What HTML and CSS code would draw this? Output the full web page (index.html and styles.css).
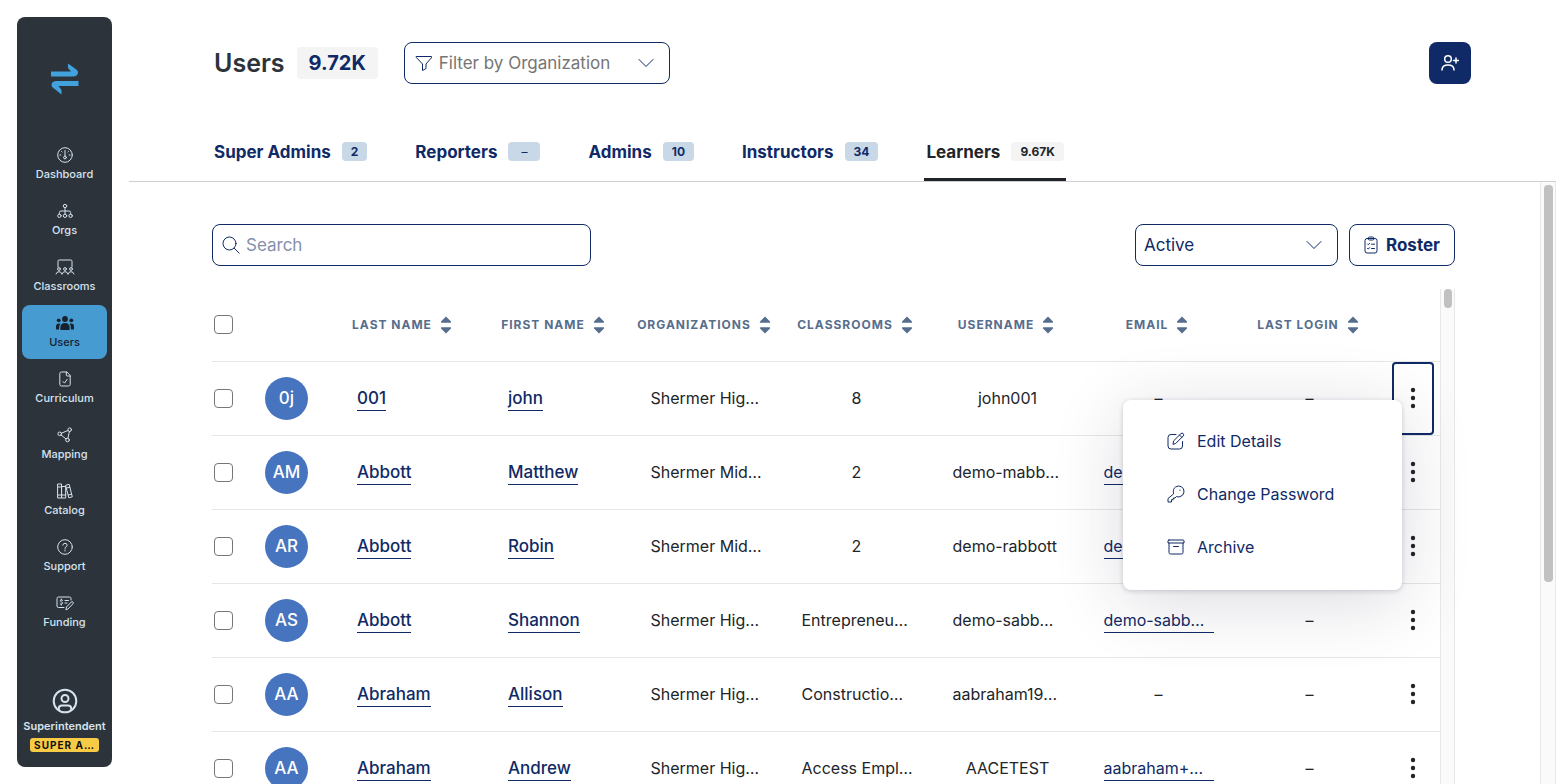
FILE: index.html
```html
<!DOCTYPE html>
<html lang="en">

<head>
  <meta charset="UTF-8" />
  <meta name="viewport" content="width=device-width, initial-scale=1.0" />
  <title>Users</title>
  <link rel="stylesheet" href="styles.css">
</head>

<body>
  <!-- shared icons -->
  <svg class="sprite" aria-hidden="true">
    <symbol id="i-chevron" viewBox="0 0 16 10">
      <path d="M1 1.5l7 7 7-7" />
    </symbol>
    <symbol id="i-sort" viewBox="0 0 12 18">
      <path d="M6 0.5L11 5.5q.6 1.3-.8 1.3H1.8Q.4 6.8 1 5.5zM6 17.5L11 12.5q.6-1.3-.8-1.3H1.8Q.4 11.2 1 12.5z" />
    </symbol>
    <symbol id="i-dots" viewBox="0 0 6 22">
      <circle cx="3" cy="3" r="2.2" />
      <circle cx="3" cy="11" r="2.2" />
      <circle cx="3" cy="19" r="2.2" />
    </symbol>
  </svg>

  <aside class="sidebar">
    <a class="logo" href="#" aria-label="Home">
      <svg width="28" height="32" viewBox="0 0 28 32">
        <path d="M0 8.5H20L17 5V0.5L25 6.2Q27.5 8 27 10Q26 13.5 22 13.5H0z" />
        <path d="M27.500 18H6Q0.500 18 0.500 22Q0.500 24 3 25.5L10.500 31.500V27L7.500 23H27.500z" />
      </svg>
    </a>

    <nav class="nav">
      <a href="#">
        <svg width="16" height="16" viewBox="0 0 16 16">
          <circle cx="8" cy="8" r="7.3" />
          <circle cx="8" cy="10.5" r="1.4" />
          <path d="M8 9V3.5M3 8h.8M12.2 8h.8M4.5 4.5l.5.5M11.5 4.5l-.5.5" />
        </svg>
        Dashboard
      </a>
      <a href="#">
        <svg width="16" height="16" viewBox="0 0 16 16">
          <circle cx="8" cy="3" r="1.7" />
          <circle cx="2.4" cy="12.8" r="1.7" />
          <circle cx="8" cy="12.8" r="1.7" />
          <circle cx="13.6" cy="12.8" r="1.7" />
          <path d="M8 4.7v6.4M2.4 11V9.5Q2.4 8 4 8h8q1.6 0 1.6 1.5V11" />
        </svg>
        Orgs
      </a>
      <a href="#">
        <svg width="20" height="16" viewBox="0 0 20 16">
          <path d="M3 8V2.2Q3 1 4.2 1h11.6Q17 1 17 2.2V8" />
          <circle cx="4" cy="10" r="1.4" />
          <circle cx="10" cy="10" r="1.4" />
          <circle cx="16" cy="10" r="1.4" />
          <path d="M1 15q.6-2.3 3-2.3T7 15M7 15q.6-2.3 3-2.3T13 15M13 15q.6-2.3 3-2.3T19 15" />
        </svg>
        Classrooms
      </a>
      <a href="#" class="active">
        <svg width="20" height="16" viewBox="0 0 20 16">
          <circle cx="10" cy="4" r="2.9" />
          <circle cx="3.7" cy="5.3" r="1.9" />
          <circle cx="16.3" cy="5.3" r="1.9" />
          <path d="M5.4 15v-2.5Q5.4 8 10 8t4.6 4.5V15zM1 14.5V11.8Q1 8.5 4 8.5q.8 0 1.3.3Q4 10.500 4 14.5zM19 14.5V11.8Q19 8.5 16 8.5q-.8 0-1.3.3Q16 10.5 16 14.5z" />
        </svg>
        Users
      </a>
      <a href="#">
        <svg width="16" height="16" viewBox="0 0 16 16">
          <path d="M9.5 1H4.5Q2.8 1 2.8 2.7v10.6Q2.8 15 4.5 15h7q1.7 0 1.7-1.7V4.8zM9.3 1v3q0 1 1 1h2.9M6 10.6l1.5 1.5 2.7-3.8" />
        </svg>
        Curriculum
      </a>
      <a href="#">
        <svg width="16" height="16" viewBox="0 0 16 16">
          <circle cx="2.7" cy="6.8" r="1.8" />
          <circle cx="12.7" cy="2.7" r="1.8" />
          <circle cx="10.5" cy="13" r="1.8" />
          <path d="M4.4 6.2l6.6-2.7M12.4 4.5l-1.5 6.7M4 8l5 3.9" />
        </svg>
        Mapping
      </a>
      <a href="#">
        <svg width="16" height="16" viewBox="0 0 16 16">
          <path d="M1 1h3.5v14H1zM5 3.5h3.7V15H5zM1 4h3.5M1 12h3.5M5 12h3.7M8.9 2.2l3.2-.9 3.2 12.5-3.1.9zM9.7 5l3.1-.8M11.4 12l3.2-.8" />
        </svg>
        Catalog
      </a>
      <a href="#">
        <svg width="16" height="16" viewBox="0 0 16 16">
          <circle cx="8" cy="8" r="7.3" />
          <path d="M5.8 6.2Q5.9 4.3 8 4.3t2.2 1.9Q10.2 7.2 9 7.8T8 9.5M8 11v1" />
        </svg>
        Support
      </a>
      <a href="#">
        <svg width="18" height="16" viewBox="0 0 18 16">
          <path d="M8 12.5H2.5Q1 12.5 1 11V3.5Q1 2 2.5 2h11Q15 2 15 3.5V5M6.6 5.3Q5.9 4.7 5 4.9q-1 .3-.6 1.3.3.5 1.2.8 1 .3 1 1.2-.2.900-1.2.9T4 8.600M5.3 4v.8M5.3 9.2v.9M9 5.500h3.500M9 8h2M10 14.500l.5-2.500 4.700-5q.9-.8 1.700 0 .8.8.1 1.700l-4.600 4.900z" />
        </svg>
        Funding
      </a>
    </nav>

    <div class="profile">
      <svg width="26" height="26" viewBox="0 0 26 26">
        <circle cx="13" cy="13" r="11.3" />
        <circle cx="13" cy="10.5" r="3.5" />
        <path d="M6.8 22V20.5Q6.8 17.5 10 17.5h6q3.2 0 3.2 3V22" />
      </svg>
      <span class="profile-name">Superintendent</span>
      <span class="role">SUPER A…</span>
    </div>
  </aside>

  <main class="main">
    <header class="header">
      <h1>Users</h1>
      <span class="total">9.72K</span>
      <div class="field filter">
        <svg width="18" height="18" viewBox="0 0 18 18">
          <path d="M1.5 2.5h15v1.2L11 10v4.5L7.5 16.5V10L1.5 3.7z" />
        </svg>
        <select aria-label="Filter by Organization">
          <option>Filter by Organization</option>
        </select>
        <svg class="chevron" width="16" height="10"><use href="#i-chevron" /></svg>
      </div>
      <button class="add" aria-label="Add user">
        <svg width="18" height="18" viewBox="0 0 18 18">
          <circle cx="7" cy="5" r="3.3" />
          <path d="M1 16q0-5 6-5t6 5M15 4v5M12.5 6.5h5" />
        </svg>
      </button>
    </header>

    <nav class="tabs">
      <a href="#">Super Admins <span class="count">2</span></a>
      <a href="#">Reporters <span class="count empty">–</span></a>
      <a href="#">Admins <span class="count">10</span></a>
      <a href="#">Instructors <span class="count">34</span></a>
      <a href="#" class="current">Learners <span class="count">9.67K</span></a>
    </nav>

    <div class="panel">
      <section class="content">
        <div class="toolbar">
          <div class="field search">
            <svg width="18" height="18" viewBox="0 0 18 18">
              <circle cx="7.5" cy="7.5" r="6.5" />
              <path d="M12.2 12.2l5 5" />
            </svg>
            <input type="search" placeholder="Search" aria-label="Search">
          </div>
          <div class="field status">
            <select aria-label="Status">
              <option>Active</option>
            </select>
            <svg class="chevron" width="16" height="10"><use href="#i-chevron" /></svg>
          </div>
          <button class="roster">
            <svg width="14" height="18" viewBox="0 0 14 18">
              <rect x="1" y="2.5" width="12" height="14.5" rx="2" />
              <path d="M4 2.5Q4 1 5.5 1h3Q10 1 10 2.5T8.5 4h-3Q4 4 4 2.5zM3.5 8l.8.8L5.6 7.3M7.5 8.2h3M3.5 12.3l.8.8 1.3-1.5M7.5 12.5h3" />
            </svg>
            Roster
          </button>
        </div>

        <div class="table-wrap">
          <table>
            <colgroup>
              <col class="col-check">
              <col class="col-avatar">
              <col span="7">
              <col class="col-actions">
            </colgroup>
            <thead>
              <tr>
                <th class="check"><input type="checkbox" aria-label="Select all"></th>
                <th></th>
                <th><button>Last Name <svg><use href="#i-sort" /></svg></button></th>
                <th><button>First Name <svg><use href="#i-sort" /></svg></button></th>
                <th><button>Organizations <svg><use href="#i-sort" /></svg></button></th>
                <th><button>Classrooms <svg><use href="#i-sort" /></svg></button></th>
                <th><button>Username <svg><use href="#i-sort" /></svg></button></th>
                <th><button>Email <svg><use href="#i-sort" /></svg></button></th>
                <th><button>Last Login <svg><use href="#i-sort" /></svg></button></th>
                <th></th>
              </tr>
            </thead>
            <tbody>
              <tr>
                <td class="check"><input type="checkbox" aria-label="Select john 001"></td>
                <td><span class="avatar">0j</span></td>
                <td class="name"><a href="#">001</a></td>
                <td class="name"><a href="#">john</a></td>
                <td><span class="clip">Shermer Hig…</span></td>
                <td>8</td>
                <td>john001</td>
                <td>–</td>
                <td>–</td>
                <td class="actions">
                  <button class="more open" aria-label="Actions"><svg><use href="#i-dots" /></svg></button>
                  <div class="menu">
                    <button>
                      <svg width="18" height="18" viewBox="0 0 18 18">
                        <path d="M9 2.5H4Q1 2.5 1 5.5V14q0 3 3 3h8.5q3 0 3-3V9.5M6 12l.7-3.2L14 1.5q1-.9 2.2.2 1 1.1.1 2.2L9 11.2zM12.5 3l2.3 2.3" />
                      </svg>
                      Edit Details
                    </button>
                    <button>
                      <svg width="18" height="18" viewBox="0 0 18 18">
                        <path d="M6.5 8.5Q5.5 4 8.5 2T14.5 1.8Q17.3 3.5 17 7T13 11.7Q11 12.3 9.5 11.5L8 13H6.3v1.7H4.5V17H1v-3z" />
                        <path d="M12.8 5.2h.4" />
                      </svg>
                      Change Password
                    </button>
                    <button>
                      <svg width="18" height="18" viewBox="0 0 18 18">
                        <path d="M2 2h14q1 0 1 1v2H1V3Q1 2 2 2zM2 5v9.5Q2 16 3.5 16h11q1.5 0 1.5-1.5V5M6.5 8.5h5" />
                      </svg>
                      Archive
                    </button>
                  </div>
                </td>
              </tr>
              <tr>
                <td class="check"><input type="checkbox" aria-label="Select Matthew Abbott"></td>
                <td><span class="avatar">AM</span></td>
                <td class="name"><a href="#">Abbott</a></td>
                <td class="name"><a href="#">Matthew</a></td>
                <td><span class="clip">Shermer Mid…</span></td>
                <td>2</td>
                <td><span class="clip">demo-mabb…</span></td>
                <td><a href="#" class="clip">demo-mab…</a></td>
                <td>–</td>
                <td class="actions"><button class="more" aria-label="Actions"><svg><use href="#i-dots" /></svg></button></td>
              </tr>
              <tr>
                <td class="check"><input type="checkbox" aria-label="Select Robin Abbott"></td>
                <td><span class="avatar">AR</span></td>
                <td class="name"><a href="#">Abbott</a></td>
                <td class="name"><a href="#">Robin</a></td>
                <td><span class="clip">Shermer Mid…</span></td>
                <td>2</td>
                <td><span class="clip">demo-rabbott</span></td>
                <td><a href="#" class="clip">demo-rabb…</a></td>
                <td>–</td>
                <td class="actions"><button class="more" aria-label="Actions"><svg><use href="#i-dots" /></svg></button></td>
              </tr>
              <tr>
                <td class="check"><input type="checkbox" aria-label="Select Shannon Abbott"></td>
                <td><span class="avatar">AS</span></td>
                <td class="name"><a href="#">Abbott</a></td>
                <td class="name"><a href="#">Shannon</a></td>
                <td><span class="clip">Shermer Hig…</span></td>
                <td><span class="clip">Entrepreneu…</span></td>
                <td><span class="clip">demo-sabb…</span></td>
                <td><a href="#" class="clip">demo-sabb…</a></td>
                <td>–</td>
                <td class="actions"><button class="more" aria-label="Actions"><svg><use href="#i-dots" /></svg></button></td>
              </tr>
              <tr>
                <td class="check"><input type="checkbox" aria-label="Select Allison Abraham"></td>
                <td><span class="avatar">AA</span></td>
                <td class="name"><a href="#">Abraham</a></td>
                <td class="name"><a href="#">Allison</a></td>
                <td><span class="clip">Shermer Hig…</span></td>
                <td><span class="clip">Constructio…</span></td>
                <td><span class="clip">aabraham19…</span></td>
                <td>–</td>
                <td>–</td>
                <td class="actions"><button class="more" aria-label="Actions"><svg><use href="#i-dots" /></svg></button></td>
              </tr>
              <tr>
                <td class="check"><input type="checkbox" aria-label="Select Andrew Abraham"></td>
                <td><span class="avatar">AA</span></td>
                <td class="name"><a href="#">Abraham</a></td>
                <td class="name"><a href="#">Andrew</a></td>
                <td><span class="clip">Shermer Hig…</span></td>
                <td><span class="clip">Access Empl…</span></td>
                <td>AACETEST</td>
                <td><a href="#" class="clip">aabraham+…</a></td>
                <td>–</td>
                <td class="actions"><button class="more" aria-label="Actions"><svg><use href="#i-dots" /></svg></button></td>
              </tr>
            </tbody>
          </table>
          <div class="scrollbar"><div class="thumb"></div></div>
        </div>
      </section>
      <div class="scrollbar page-scroll"><div class="thumb"></div></div>
    </div>
  </main>
</body>

</html>
```

FILE: styles.css
```css
* {
  box-sizing: border-box;
}

body {
  margin: 0;
  display: flex;
  height: 100vh;
  overflow: hidden;
  background: #fff;
  color: #212529;
  font-family: Inter, "Open Sans", sans-serif;
  font-size: 17px;
}

button,
input,
select {
  font: inherit;
  color: inherit;
}

button {
  padding: 0;
  border: 0;
  background: none;
  cursor: pointer;
}

a {
  color: #0f2a66;
}

svg {
  flex: none;
  fill: none;
  stroke: currentColor;
  stroke-linecap: round;
  stroke-linejoin: round;
}

.sprite {
  display: none;
}

/* sidebar */

.sidebar {
  flex: none;
  display: flex;
  flex-direction: column;
  width: 95px;
  margin: 17px;
  padding: 0 5px 15px;
  border-radius: 8px;
  background: #2d333b;
  color: #d5e3ee;
}

.logo {
  height: 120px;
  padding-top: 46px;
  text-align: center;
}

.logo svg {
  fill: #41a2de;
  stroke: none;
}

.nav {
  display: flex;
  flex-direction: column;
  gap: 2px;
}

.nav a {
  display: flex;
  flex-direction: column;
  align-items: center;
  gap: 3px;
  height: 54px;
  padding-top: 10px;
  border-radius: 8px;
  color: inherit;
  font-size: 11px;
  font-weight: 500;
  line-height: 16px;
  text-decoration: none;
}

.nav .active {
  background: #469bd1;
  color: #16222e;
}

.nav .active svg {
  fill: currentColor;
  stroke: none;
}

.profile {
  display: flex;
  flex-direction: column;
  align-items: center;
  margin-top: auto;
}

.profile svg {
  stroke-width: 2;
}

.profile-name {
  margin: 4px 0;
  font-size: 11px;
  font-weight: 600;
  line-height: 16px;
}

.role {
  padding: 0 4px;
  border-radius: 3px;
  background: #f8cb46;
  color: #111;
  font-size: 10px;
  font-weight: 700;
  line-height: 14px;
  letter-spacing: 1px;
}

/* header */

.main {
  flex: 1;
  min-width: 0;
  display: flex;
  flex-direction: column;
}

.header {
  display: flex;
  align-items: center;
  padding: 42px 85px 0;
}

h1 {
  margin: 0;
  color: #2d333b;
  font-size: 25px;
  font-weight: 600;
  line-height: 32px;
}

.total {
  margin: 0 26px 0 12px;
  padding: 0 12px;
  border-radius: 4px;
  background: #f4f4f4;
  color: #0f2a66;
  font-size: 20px;
  font-weight: 700;
  line-height: 32px;
}

.field {
  display: flex;
  align-items: center;
  gap: 6px;
  height: 42px;
  border: 1px solid #0f2a66;
  border-radius: 8px;
  color: #0f2a66;
}

.field select,
.field input {
  flex: 1;
  min-width: 0;
  padding: 0;
  border: 0;
  outline: 0;
  background: none;
  appearance: none;
}

.filter {
  width: 266px;
  padding: 0 15px 0 10px;
}

.filter select {
  color: #757575;
}

.add {
  display: flex;
  align-items: center;
  justify-content: center;
  width: 42px;
  height: 42px;
  margin-left: auto;
  border-radius: 8px;
  background: #0f2a66;
  color: #fff;
}

.add svg {
  stroke-width: 1.5;
}

.tabs {
  display: flex;
  gap: 44px;
  height: 98px;
  padding-left: 83px;
  border-bottom: 1px solid #cfcfcf;
}

.tabs a {
  display: flex;
  align-items: center;
  gap: 11px;
  padding: 41px 2px 0;
  border-bottom: 3px solid transparent;
  font-weight: 700;
  text-decoration: none;
}

.tabs .current {
  border-bottom-color: #212529;
  color: #212529;
}

.count {
  padding: 0 9px;
  border-radius: 4px;
  background: #c9d8e6;
  font-size: 12px;
  line-height: 19px;
}

.empty {
  padding: 0 13px;
  font-weight: 400;
}

.current .count {
  background: #f4f4f4;
}

/* content */

.panel {
  flex: 1;
  min-height: 0;
  display: flex;
}

.content {
  flex: 1;
  min-width: 0;
  padding: 42px 85px 0 83px;
}

.toolbar {
  display: flex;
  gap: 11px;
  margin-bottom: 23px;
}

.search {
  width: 379px;
  margin-right: auto;
  padding: 0 9px;
}

.search input::placeholder {
  color: #8490ab;
}

.status {
  width: 203px;
  padding: 0 15px 0 8px;
}

.roster {
  display: flex;
  align-items: center;
  justify-content: center;
  gap: 8px;
  width: 106px;
  height: 42px;
  border: 1px solid #0f2a66;
  border-radius: 8px;
  color: #0f2a66;
  font-weight: 700;
}

.table-wrap {
  display: flex;
}

table {
  flex: 1;
  width: 100%;
  min-width: 0;
  table-layout: fixed;
  border-collapse: collapse;
  font-size: 16px;
}

.col-check {
  width: 33px;
}

.col-avatar {
  width: 83px;
}

.col-actions {
  width: 55px;
}

tr {
  height: 74px;
  border-bottom: 1px solid #e6e6e6;
}

thead tr {
  height: 72px;
}

th,
td {
  padding: 0;
  text-align: center;
  white-space: nowrap;
}

th {
  padding-right: 3px;
  color: #566e8c;
  font-size: 12px;
}

th button {
  display: inline-flex;
  align-items: center;
  gap: 8px;
  font-weight: 700;
  letter-spacing: 1px;
  text-transform: uppercase;
}

th button svg {
  width: 12px;
  height: 18px;
  fill: currentColor;
  stroke: none;
}

.check {
  padding: 0 0 0 2px;
  text-align: left;
}

.check input {
  display: block;
  width: 19px;
  height: 19px;
  margin: 0;
  appearance: none;
  border: 1px solid #767676;
  border-radius: 4px;
  background: #fff;
}

.avatar {
  display: block;
  width: 43px;
  height: 43px;
  margin-left: 20px;
  border-radius: 50%;
  background: #4774be;
  color: #fff;
  font-size: 17px;
  font-weight: 500;
  line-height: 43px;
}

.name {
  padding-left: 29px;
  font-size: 17px;
  text-align: left;
}

td a {
  display: inline-block;
  border-bottom: 1px solid #0f2a66;
  line-height: 24px;
  text-decoration: none;
  vertical-align: middle;
}

.name a {
  font-weight: 500;
}

.clip {
  display: inline-block;
  width: 110px;
  text-align: left;
}

.actions {
  position: relative;
}

.more {
  display: block;
  width: 42px;
  height: 73px;
  margin: 0 auto;
  border: 2px solid transparent;
  border-radius: 4px;
}

.more svg {
  width: 6px;
  height: 22px;
  fill: currentColor;
  stroke: none;
  vertical-align: middle;
}

.more.open {
  border-color: #0f2a66;
}

.menu {
  position: absolute;
  top: 38px;
  right: 38px;
  z-index: 1;
  display: flex;
  flex-direction: column;
  width: 279px;
  padding: 15px 0 16px;
  border-radius: 8px;
  background: #fff;
  box-shadow: 0 1px 5px rgba(30, 30, 60, 0.2), 0 12px 70px rgba(30, 30, 60, 0.16);
}

.menu button {
  display: flex;
  align-items: center;
  gap: 12px;
  height: 53px;
  padding-left: 44px;
  color: #0f2a66;
}

/* scrollbars */

.scrollbar {
  flex: none;
  width: 15px;
  border: 1px solid #e8e8e8;
  border-width: 0 1px;
  background: #fafafa;
}

.thumb {
  width: 8px;
  height: 19px;
  margin: 0 auto;
  border-radius: 4px;
  background: #c1c1c1;
}

.page-scroll {
  width: 16px;
  padding-top: 3px;
}

.page-scroll .thumb {
  width: 9px;
  height: 397px;
}
```
